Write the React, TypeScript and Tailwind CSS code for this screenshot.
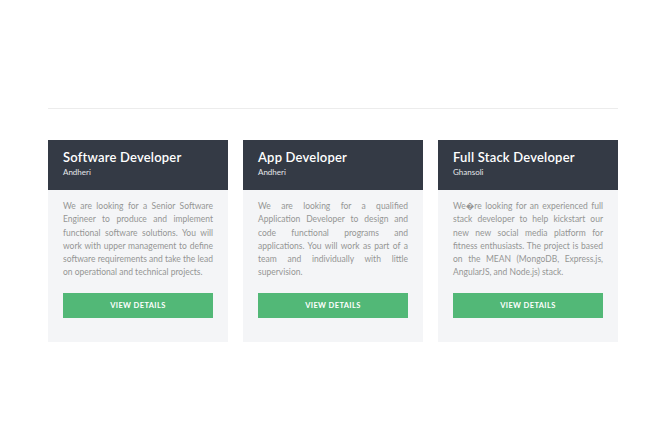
const jobs = [
  {
    title: "Software Developer",
    place: "Andheri",
    text: "We are looking for a Senior Software Engineer to produce and implement functional software solutions. You will work with upper management to define software requirements and take the lead on operational and technical projects.",
  },
  {
    title: "App Developer",
    place: "Andheri",
    text: "We are looking for a qualified Application Developer to design and code functional programs and applications. You will work as part of a team and individually with little supervision.",
  },
  {
    title: "Full Stack Developer",
    place: "Ghansoli",
    text: "We\uFFFDre looking for an experienced full stack developer to help kickstart our new new social media platform for fitness enthusiasts. The project is based on the MEAN (MongoDB, Express.js, AngularJS, and Node.js) stack.",
  },
];

function App() {
  return (
    <main className="min-h-screen w-full bg-white font-['Lato','Open_Sans',sans-serif]">
      <div className="w-[570px] ml-[48px] pt-[108px]">
        <div className="h-px bg-[#ececec]" />
        <div className="mt-[31px] grid grid-cols-3 gap-[15px]">
          {jobs.map((job) => (
            <div key={job.title} className="flex flex-col bg-[#f4f5f7]">
              <div className="h-[50px] bg-[#343a45] px-[15px] pt-[8px]">
                <h3 className="text-[13px] leading-[18px] font-semibold text-white tracking-[0.2px]">
                  {job.title}
                </h3>
                <p className="text-[8px] leading-[12px] text-[#e5e7ea]">
                  {job.place}
                </p>
              </div>
              <div className="px-[15px] pt-[10px] pb-[24px] flex flex-col flex-1">
                <p className="text-[8.5px] leading-[13.3px] text-[#959595] text-justify h-[93px]">
                  {job.text}
                </p>
                <button className="mt-auto h-[25px] w-full bg-[#52b877] text-white text-[7.5px] font-bold tracking-[0.4px]">
                  VIEW DETAILS
                </button>
              </div>
            </div>
          ))}
        </div>
      </div>
    </main>
  );
}

export default App;
